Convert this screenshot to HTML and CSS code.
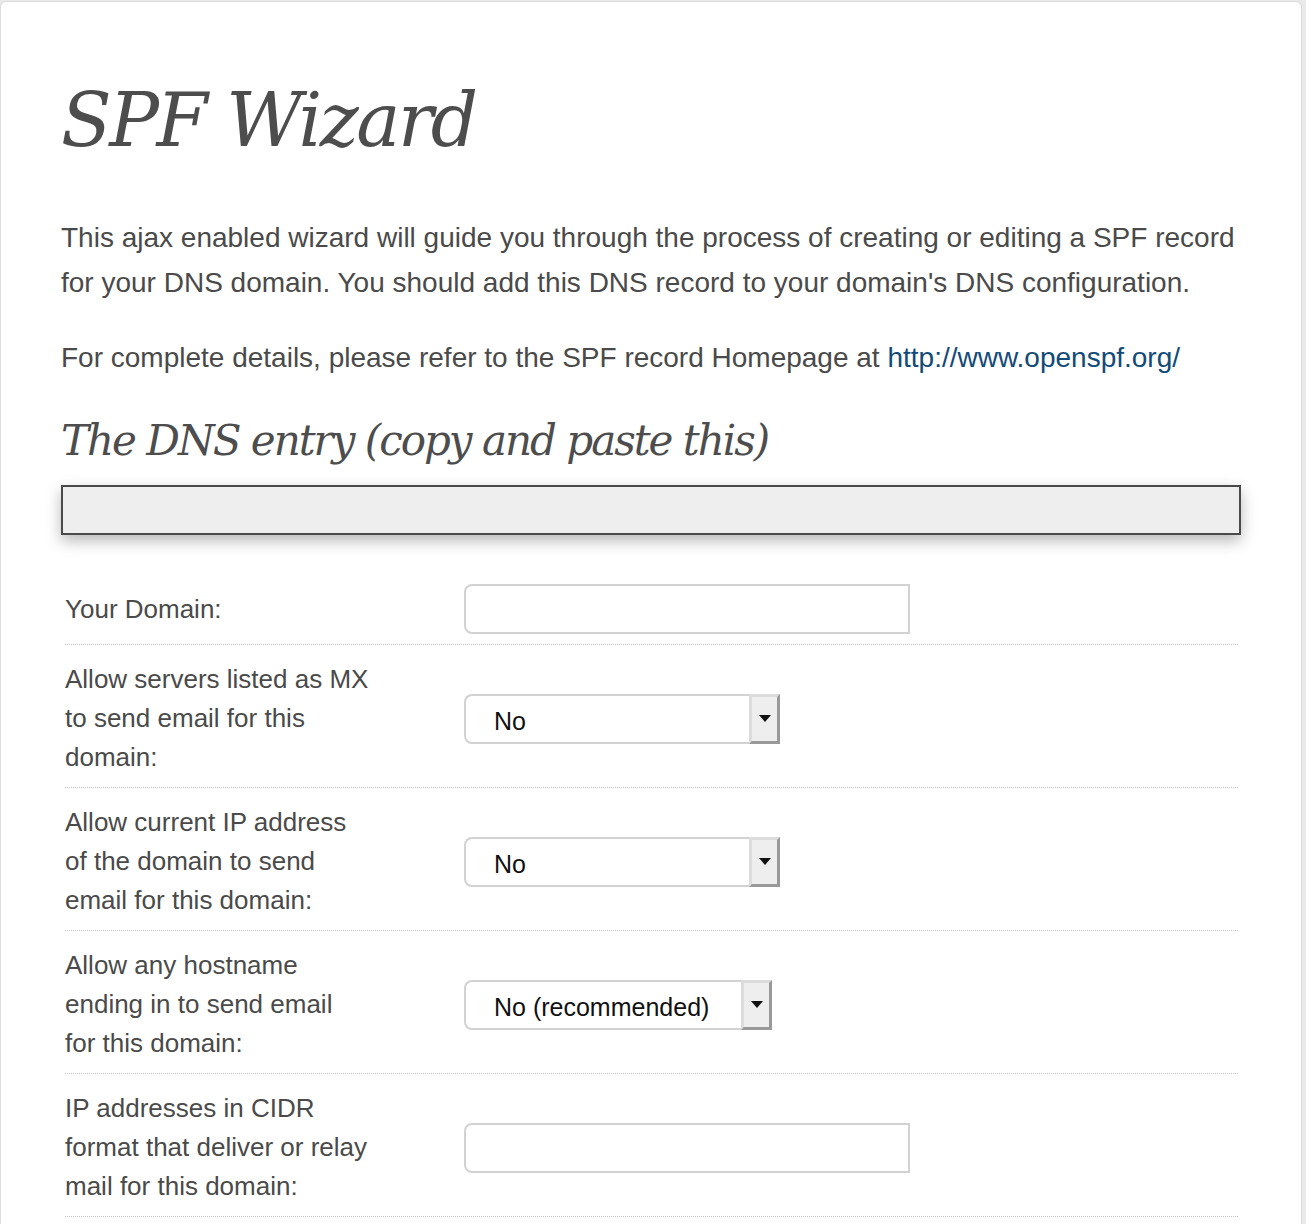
FILE: index.html
```html
<!DOCTYPE html>
<html lang="en">
<head>
<meta charset="utf-8">
<title>SPF Wizard</title>
<link rel="stylesheet" href="styles.css">
</head>
<body>
<div class="page">
  <main class="card">
    <h1 class="title">SPF Wizard</h1>
    <p class="intro">This ajax enabled wizard will guide you through the process of creating or editing a SPF record for your DNS domain. You should add this DNS record to your domain's DNS configuration.</p>
    <p class="intro intro-link">For complete details, please refer to the SPF record Homepage at <a href="#" class="link">http://www.openspf.org/</a></p>
    <h2 class="subtitle">The DNS entry (copy and paste this)</h2>
    <div class="dns-box"></div>

    <div class="form">
      <div class="row">
        <div class="label">Your Domain:</div>
        <div class="field"><div class="text-input"></div></div>
      </div>
      <div class="row">
        <div class="label">Allow servers listed as MX<br>to send email for this<br>domain:</div>
        <div class="field">
          <div class="select"><span class="select-value">No</span><span class="select-btn"><span class="arrow"></span></span></div>
        </div>
      </div>
      <div class="row">
        <div class="label">Allow current IP address<br>of the domain to send<br>email for this domain:</div>
        <div class="field">
          <div class="select"><span class="select-value">No</span><span class="select-btn"><span class="arrow"></span></span></div>
        </div>
      </div>
      <div class="row">
        <div class="label">Allow any hostname<br>ending in to send email<br>for this domain:</div>
        <div class="field">
          <div class="select select-narrow"><span class="select-value">No (recommended)</span><span class="select-btn"><span class="arrow"></span></span></div>
        </div>
      </div>
      <div class="row">
        <div class="label">IP addresses in CIDR<br>format that deliver or relay<br>mail for this domain:</div>
        <div class="field"><div class="text-input"></div></div>
      </div>
    </div>
  </main>
</div>
</body>
</html>
```

FILE: styles.css
```css
html, body {
  margin: 0;
  padding: 0;
}
body {
  background: #e9e9e9;
  font-family: "Liberation Sans", Arial, sans-serif;
  color: #4a4a4a;
}
.page {
  padding: 1px 4px 0 0;
}
.card {
  background: #fff;
  border: 1px solid #dcdcdc;
  border-bottom: none;
  border-radius: 6px 6px 0 0;
  padding: 73px 60px 40px 60px;
  min-height: 1300px;
}
.title {
  margin: 0;
  font-family: "DejaVu Serif", Georgia, serif;
  font-style: italic;
  font-weight: normal;
  font-size: 74px;
  line-height: 90px;
  letter-spacing: -2.5px;
  color: #4d4d4d;
}
.intro {
  margin: 50px 0 0 0;
  font-size: 28px;
  line-height: 45px;
}
.intro-link {
  margin-top: 30px;
}
.link {
  color: #124a78;
  text-decoration: none;
}
.subtitle {
  margin: 31px 0 0 0;
  font-family: "DejaVu Serif", Georgia, serif;
  font-style: italic;
  font-weight: normal;
  font-size: 42px;
  line-height: 60px;
  letter-spacing: -2px;
  color: #4d4d4d;
}
.dns-box {
  margin-top: 14px;
  height: 46px;
  border: 2px solid #4a4a4a;
  background: #eee;
  box-shadow: 0 6px 14px rgba(0, 0, 0, 0.28);
}
.form {
  margin: 34px 3px 0 4px;
}
.row {
  display: grid;
  grid-template-columns: 399px 1fr;
  align-items: center;
  padding: 15px 0 10px 0;
  border-bottom: 1px dotted #c4c4c4;
}
.label {
  font-size: 26px;
  line-height: 39px;
}
.field {
  display: flex;
  align-items: center;
}
.text-input {
  box-sizing: border-box;
  width: 446px;
  height: 50px;
  border: 2px solid #d2d2d2;
  border-radius: 8px 0 0 8px;
  background: #fff;
}
.select {
  box-sizing: border-box;
  display: flex;
  width: 316px;
  height: 50px;
  border: 2px solid #d2d2d2;
  border-right: none;
  border-radius: 8px 0 0 8px;
  background: #fff;
}
.select-narrow {
  width: 308px;
}
.select-value {
  flex: 1;
  padding-left: 28px;
  font-size: 25px;
  line-height: 50px;
  color: #111;
  white-space: nowrap;
}
.select-btn {
  box-sizing: border-box;
  width: 31px;
  margin-top: -2px;
  margin-bottom: -2px;
  border-style: solid;
  border-width: 3px;
  border-color: #dcdcdc #999 #999 #dcdcdc;
  background: #eee;
  display: flex;
  align-items: center;
  justify-content: center;
}
.arrow {
  width: 0;
  height: 0;
  border-left: 6px solid transparent;
  border-right: 6px solid transparent;
  border-top: 7px solid #111;
}
```
